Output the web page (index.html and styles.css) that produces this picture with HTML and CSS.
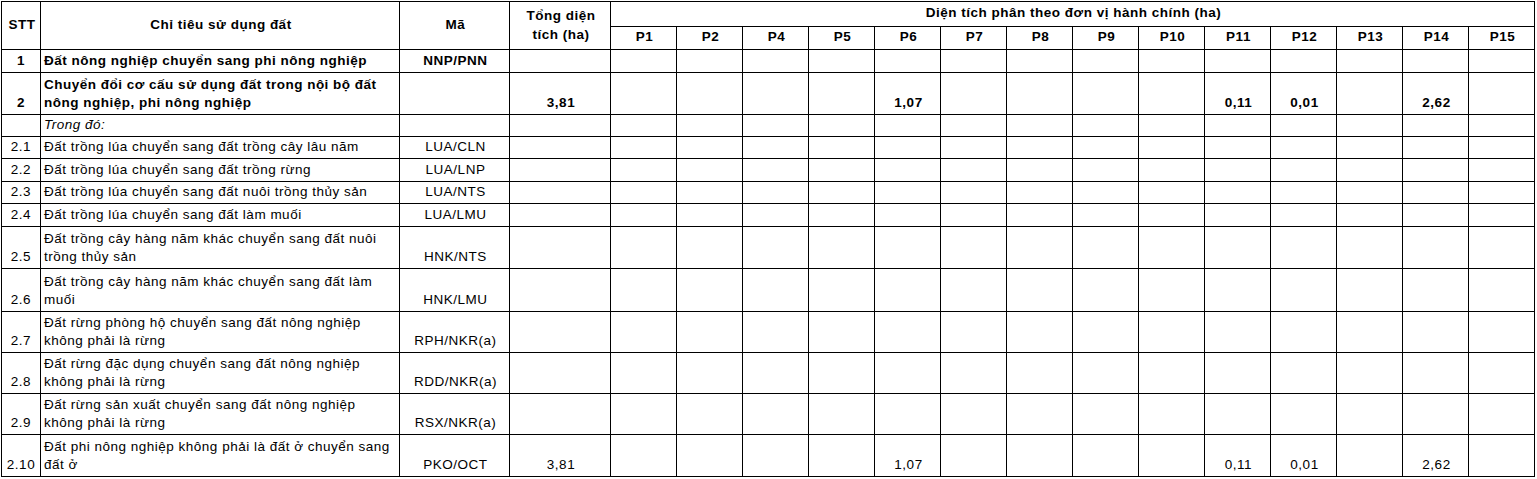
FILE: index.html
```html
<!DOCTYPE html>
<html lang="vi">
<head>
<meta charset="utf-8">
<title>Chuyển đổi mục đích sử dụng đất</title>
<link rel="stylesheet" href="styles.css">
</head>
<body>
<div class="wrap">
<table class="grid">
  <colgroup>
    <col class="c-stt"><col class="c-name"><col class="c-code"><col class="c-total">
    <col class="c-p"><col class="c-p"><col class="c-p"><col class="c-p"><col class="c-p"><col class="c-p"><col class="c-p">
    <col class="c-p"><col class="c-p"><col class="c-p"><col class="c-p"><col class="c-p"><col class="c-p"><col class="c-p">
  </colgroup>
  <thead>
    <tr class="h1">
      <th rowspan="2">STT</th>
      <th rowspan="2">Chỉ tiêu sử dụng đất</th>
      <th rowspan="2">Mã</th>
      <th rowspan="2" class="two">Tổng diện<br>tích (ha)</th>
      <th colspan="14">Diện tích phân theo đơn vị hành chính (ha)</th>
    </tr>
    <tr class="h2">
      <th>P1</th><th>P2</th><th>P4</th><th>P5</th><th>P6</th><th>P7</th><th>P8</th>
      <th>P9</th><th>P10</th><th>P11</th><th>P12</th><th>P13</th><th>P14</th><th>P15</th>
    </tr>
  </thead>
  <tbody>
    <tr class="h23 bold">
      <td class="stt">1</td><td class="name">Đất nông nghiệp chuyển sang phi nông nghiệp</td><td class="code">NNP/PNN</td><td></td>
      <td></td><td></td><td></td><td></td><td></td><td></td><td></td><td></td><td></td><td></td><td></td><td></td><td></td><td></td>
    </tr>
    <tr class="h42 bold">
      <td class="stt">2</td><td class="name">Chuyển đổi cơ cấu sử dụng đất trong nội bộ đất<br>nông nghiệp, phi nông nghiệp</td><td class="code"></td><td class="num">3,81</td>
      <td></td><td></td><td></td><td></td><td class="num">1,07</td><td></td><td></td><td></td><td></td><td class="num">0,11</td><td class="num">0,01</td><td></td><td class="num">2,62</td><td></td>
    </tr>
    <tr class="h22">
      <td class="stt"></td><td class="name it">Trong đó:</td><td class="code"></td><td></td>
      <td></td><td></td><td></td><td></td><td></td><td></td><td></td><td></td><td></td><td></td><td></td><td></td><td></td><td></td>
    </tr>
    <tr class="h22">
      <td class="stt">2.1</td><td class="name">Đất trồng lúa chuyển sang đất trồng cây lâu năm</td><td class="code">LUA/CLN</td><td></td>
      <td></td><td></td><td></td><td></td><td></td><td></td><td></td><td></td><td></td><td></td><td></td><td></td><td></td><td></td>
    </tr>
    <tr class="h23">
      <td class="stt">2.2</td><td class="name">Đất trồng lúa chuyển sang đất trồng rừng</td><td class="code">LUA/LNP</td><td></td>
      <td></td><td></td><td></td><td></td><td></td><td></td><td></td><td></td><td></td><td></td><td></td><td></td><td></td><td></td>
    </tr>
    <tr class="h22">
      <td class="stt">2.3</td><td class="name">Đất trồng lúa chuyển sang đất nuôi trồng thủy sản</td><td class="code">LUA/NTS</td><td></td>
      <td></td><td></td><td></td><td></td><td></td><td></td><td></td><td></td><td></td><td></td><td></td><td></td><td></td><td></td>
    </tr>
    <tr class="h23">
      <td class="stt">2.4</td><td class="name">Đất trồng lúa chuyển sang đất làm muối</td><td class="code">LUA/LMU</td><td></td>
      <td></td><td></td><td></td><td></td><td></td><td></td><td></td><td></td><td></td><td></td><td></td><td></td><td></td><td></td>
    </tr>
    <tr class="h42">
      <td class="stt">2.5</td><td class="name">Đất trồng cây hàng năm khác chuyển sang đất nuôi<br>trồng thủy sản</td><td class="code">HNK/NTS</td><td></td>
      <td></td><td></td><td></td><td></td><td></td><td></td><td></td><td></td><td></td><td></td><td></td><td></td><td></td><td></td>
    </tr>
    <tr class="h43">
      <td class="stt">2.6</td><td class="name">Đất trồng cây hàng năm khác chuyển sang đất làm<br>muối</td><td class="code">HNK/LMU</td><td></td>
      <td></td><td></td><td></td><td></td><td></td><td></td><td></td><td></td><td></td><td></td><td></td><td></td><td></td><td></td>
    </tr>
    <tr class="h41">
      <td class="stt">2.7</td><td class="name">Đất rừng phòng hộ chuyển sang đất nông nghiệp<br>không phải là rừng</td><td class="code">RPH/NKR(a)</td><td></td>
      <td></td><td></td><td></td><td></td><td></td><td></td><td></td><td></td><td></td><td></td><td></td><td></td><td></td><td></td>
    </tr>
    <tr class="h41">
      <td class="stt">2.8</td><td class="name">Đất rừng đặc dụng chuyển sang đất nông nghiệp<br>không phải là rừng</td><td class="code">RDD/NKR(a)</td><td></td>
      <td></td><td></td><td></td><td></td><td></td><td></td><td></td><td></td><td></td><td></td><td></td><td></td><td></td><td></td>
    </tr>
    <tr class="h41">
      <td class="stt">2.9</td><td class="name">Đất rừng sản xuất chuyển sang đất nông nghiệp<br>không phải là rừng</td><td class="code">RSX/NKR(a)</td><td></td>
      <td></td><td></td><td></td><td></td><td></td><td></td><td></td><td></td><td></td><td></td><td></td><td></td><td></td><td></td>
    </tr>
    <tr class="h42">
      <td class="stt">2.10</td><td class="name">Đất phi nông nghiệp không phải là đất ở chuyển sang<br>đất ở</td><td class="code">PKO/OCT</td><td class="num">3,81</td>
      <td></td><td></td><td></td><td></td><td class="num">1,07</td><td></td><td></td><td></td><td></td><td class="num">0,11</td><td class="num">0,01</td><td></td><td class="num">2,62</td><td></td>
    </tr>
  </tbody>
</table>
</div>
</body>
</html>
```

FILE: styles.css
```css
html, body {
  margin: 0;
  padding: 0;
  background: #fff;
}
.wrap {
  padding: 1px 0 0 1px;
}
.grid {
  border-collapse: collapse;
  table-layout: fixed;
  width: 1533px;
  font-family: "Liberation Sans", Arial, sans-serif;
  font-size: 13.5px;
  letter-spacing: 0.5px;
  color: #000;
}
.c-stt { width: 39px; }
.c-name { width: 359px; }
.c-code { width: 110px; }
.c-total { width: 101px; }
.c-p { width: 66px; }

.grid th, .grid td {
  border: 1px solid #000;
  padding: 0 1px 2px 3px;
  line-height: 18px;
  white-space: nowrap;
  overflow: hidden;
}
.grid th {
  font-weight: bold;
  text-align: center;
  vertical-align: middle;
}
.h1 { height: 25px; }
.h2 { height: 23px; }
.h1 th.two { line-height: 19px; padding-top: 1px; }

.grid td {
  vertical-align: bottom;
  text-align: center;
}
.grid td.stt { padding-left: 1px; }
.grid td.name { text-align: left; padding-left: 3px; }
.bold td { font-weight: bold; }
.it { font-style: italic; }

.h22 { height: 22px; }
.h23 { height: 23px; }
.h41 { height: 41px; }
.h42 { height: 42px; }
.h43 { height: 43px; }
```
